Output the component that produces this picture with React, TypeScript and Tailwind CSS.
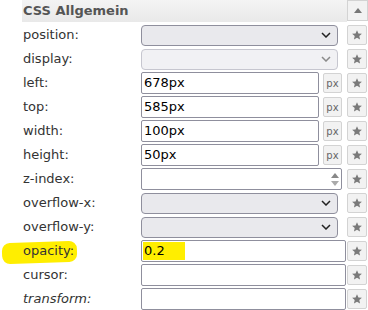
import React from "react";

const font = { fontFamily: '"DejaVu Sans", Verdana, sans-serif' };

function Star() {
  return (
    <div className="flex h-[20px] w-[20px] items-center justify-center rounded-[2px] border border-[#d3d3d3] bg-[#f2f2f2]">
      <svg width="12" height="12" viewBox="0 0 24 24">
        <path
          d="M12 2.5l2.9 6.3 6.9.7-5.2 4.6 1.5 6.8L12 17.4l-6.1 3.5 1.5-6.8L2.2 9.5l6.9-.7z"
          fill="#7a7a7a"
        />
      </svg>
    </div>
  );
}

function Chevron({ light }: { light?: boolean }) {
  return (
    <svg width="10" height="6" viewBox="0 0 10 6" className="shrink-0">
      <path d="M1 1l4 4 4-4" fill="none" stroke={light ? "#8a8a8a" : "#222"} strokeWidth="1.5" />
    </svg>
  );
}

function Select({ disabled }: { disabled?: boolean }) {
  return (
    <div
      className={
        "flex h-[21px] w-[197px] items-center justify-end rounded-[4px] border pr-[6px] " +
        (disabled ? "border-[#c6c6cf] bg-[#f1f1f4]" : "border-[#8f8f9d] bg-[#e9e9ed]")
      }
    >
      <Chevron light={disabled} />
    </div>
  );
}

function PxInput({ value }: { value: string }) {
  return (
    <div className="flex items-center">
      <div className="flex h-[22px] w-[178px] items-center rounded-[2px] border border-[#8f8f9d] bg-white pl-[2px] text-[13px] text-black">
        {value}
      </div>
      <div className="ml-[4px] flex h-[20px] w-[19px] items-center justify-center rounded-[2px] border border-[#d3d3d3] bg-[#f2f2f2] text-[10px] text-[#666]">
        px
      </div>
    </div>
  );
}

function Row({ label, children, italic }: { label: React.ReactNode; children: React.ReactNode; italic?: boolean }) {
  return (
    <div className="flex h-[24px] items-center">
      <div className={"w-[141px] pl-[23px] text-[13px] text-[#333] " + (italic ? "italic" : "")}>{label}</div>
      <div className="w-[206px]">{children}</div>
      <Star />
    </div>
  );
}

export default function App() {
  return (
    <div className="h-[310px] w-[368px] overflow-hidden bg-white" style={font}>
      <div className="flex h-[23px] items-start">
        <div className="w-[22px]" />
        <div className="flex h-[22px] flex-1 items-center bg-gradient-to-b from-[#f4f4f4] to-[#e9e9e9] pl-[1px] text-[13px] font-bold text-[#555]">
          CSS Allgemein
        </div>
        <div className="flex h-[21px] w-[21px] items-center justify-center border border-[#d3d3d3] bg-[#f2f2f2]">
          <svg width="8" height="5" viewBox="0 0 8 5">
            <path d="M0 5L4 0l4 5z" fill="#777" />
          </svg>
        </div>
      </div>
      <Row label="position:">
        <Select />
      </Row>
      <Row label="display:">
        <Select disabled />
      </Row>
      <Row label="left:">
        <PxInput value="678px" />
      </Row>
      <Row label="top:">
        <PxInput value="585px" />
      </Row>
      <Row label="width:">
        <PxInput value="100px" />
      </Row>
      <Row label="height:">
        <PxInput value="50px" />
      </Row>
      <Row label="z-index:">
        <div className="flex h-[22px] w-[201px] items-center justify-end rounded-[2px] border border-[#8f8f9d] bg-white pr-[2px]">
          <div className="flex flex-col items-center gap-[3px]">
            <svg width="8" height="5" viewBox="0 0 8 5">
              <path d="M0 5L4 0l4 5z" fill="#888" />
            </svg>
            <svg width="8" height="5" viewBox="0 0 8 5">
              <path d="M0 0L4 5l4-5z" fill="#aaa" />
            </svg>
          </div>
        </div>
      </Row>
      <Row label="overflow-x:">
        <Select />
      </Row>
      <Row label="overflow-y:">
        <Select />
      </Row>
      <Row
        label={
          <span className="relative inline-block">
            <span className="absolute left-[-21px] right-[-3px] top-[1px] bottom-[-2px] -rotate-2 rounded-[8px] bg-[#ffee00]" />
            <span className="relative">opacity:</span>
          </span>
        }
      >
        <div className="flex h-[22px] w-[205px] items-center rounded-[2px] border border-[#8f8f9d] bg-white pl-[1px] text-[13px] text-black">
          <span className="flex h-[18px] w-[42px] items-center bg-[#ffee00] pl-[1px]">0.2</span>
        </div>
      </Row>
      <Row label="cursor:">
        <div className="h-[22px] w-[205px] rounded-[2px] border border-[#8f8f9d] bg-white" />
      </Row>
      <Row label="transform:" italic>
        <div className="h-[22px] w-[205px] rounded-[2px] border border-[#8f8f9d] bg-white" />
      </Row>
    </div>
  );
}
